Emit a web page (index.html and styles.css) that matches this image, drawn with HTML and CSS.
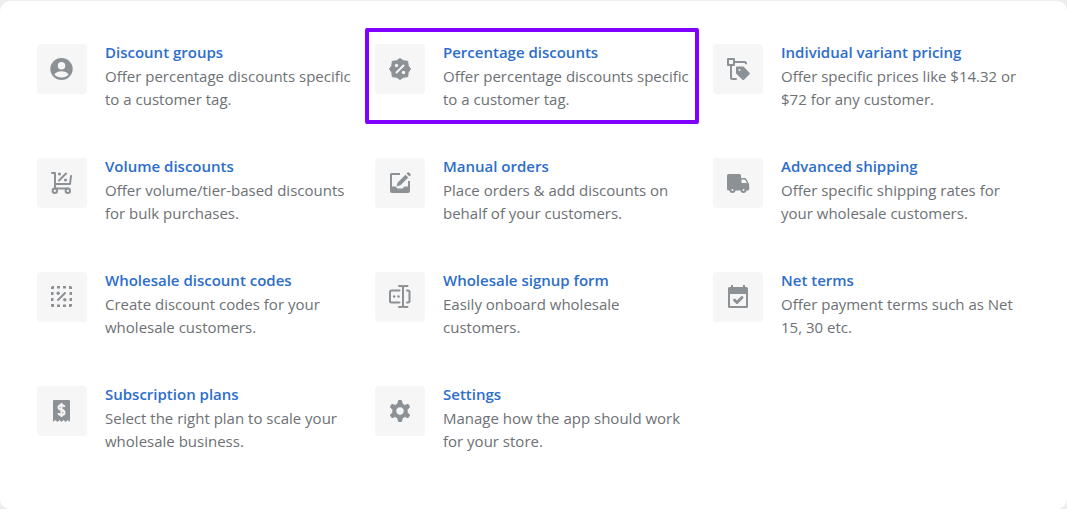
FILE: index.html
```html
<!DOCTYPE html>
<html lang="en">
<head>
<meta charset="utf-8">
<meta name="viewport" content="width=device-width, initial-scale=1">
<title>Wholesale features</title>
<link rel="stylesheet" href="styles.css">
</head>
<body>
<main class="card">
  <ul class="features">
    <li class="feature">
      <span class="tile"><svg class="icon" viewBox="0 0 24 24" aria-hidden="true"><path fill-rule="evenodd" d="M11.500 1a11.200 11 0 1 0 0 22a11.200 11 0 0 0 0-22zM11.500 5a3.700 3.700 0 1 1 0 7.500a3.700 3.700 0 0 1 0-7.500zM11.500 20.500c-3 0-5.500-1-7.200-3c1.700-2 4.200-3.200 7.200-3.200s5.500 1.200 7.200 3.200c-1.700 2-4.200 3-7.200 3z"/></svg></span>
      <div class="text"><a class="title" href="#">Discount groups</a><p class="desc">Offer percentage discounts specific to a customer tag.</p></div>
    </li>
    <li class="feature selected">
      <span class="tile"><svg class="icon" viewBox="0 0 24 24" aria-hidden="true"><path d="M12 1.500l3.500 2.300l4.200 .5l.5 4.200l2.300 3.500l-2.300 3.500l-.5 4.200l-4.200 .5l-3.500 2.300l-3.500-2.300l-4.200-.5l-.5-4.200l-2.300-3.500l2.300-3.500l.5-4.200l4.200-.5z" stroke="currentColor" stroke-linejoin="round"/><g class="cut"><path class="line" d="M8.500 15.500l7-7"/><circle cx="8.500" cy="8.500" r="1.700"/><circle cx="15.500" cy="15.500" r="1.700"/></g></svg></span>
      <div class="text"><a class="title" href="#">Percentage discounts</a><p class="desc">Offer percentage discounts specific to a customer tag.</p></div>
    </li>
    <li class="feature">
      <span class="tile"><svg class="icon" viewBox="0 0 24 24" aria-hidden="true"><path class="line" d="M2 2h6v6H2zM8 5h10.500q1.500 0 1.500 1.500M5 8v12.500q0 1.500 1.500 1.500H10"/><path fill-rule="evenodd" d="M11 9.500h6.500l6 6.200q.7.800 0 1.500l-5.500 5.500q-.8.700-1.500 0L10 16.500V10.500q0-1 1-1zM13.500 12a1 1 0 1 0 0 2a1 1 0 0 0 0-2z"/></svg></span>
      <div class="text"><a class="title" href="#">Individual variant pricing</a><p class="desc">Offer specific prices like $14.32 or $72 for any customer.</p></div>
    </li>
    <li class="feature">
      <span class="tile"><svg class="icon" viewBox="0 0 24 24" aria-hidden="true"><path class="line" d="M2 2h3v15.500h13M5 13h15L21 5"/><circle class="line" cx="4.800" cy="19.700" r="2.200"/><circle class="line" cx="17.800" cy="19.700" r="2.200"/><path class="line" d="M9 9.500l7-7"/><circle cx="9.500" cy="3" r="1.600"/><circle cx="15.500" cy="9" r="1.600"/></svg></span>
      <div class="text"><a class="title" href="#">Volume discounts</a><p class="desc">Offer volume/tier-based discounts for bulk purchases.</p></div>
    </li>
    <li class="feature">
      <span class="tile"><svg class="icon" viewBox="0 0 24 24" aria-hidden="true"><path fill-rule="evenodd" d="M3.500 2H12v2H4v11.500h3.500l2 2h5l2-2H20V10h2v10q0 2-2 2H4q-2 0-2-2V3.500Q2 2 3.500 2z"/><path d="M8.500 15.500l1.200-4l7.800-7.800l2.800 2.800l-7.800 7.800zM18.500 2.600l1-1q.7-.7 1.500 0l1.500 1.500q.7.700 0 1.500l-1 1z"/></svg></span>
      <div class="text"><a class="title" href="#">Manual orders</a><p class="desc">Place orders &amp; add discounts on behalf of your customers.</p></div>
    </li>
    <li class="feature">
      <span class="tile"><svg class="icon" viewBox="0 0 24 24" aria-hidden="true"><path fill-rule="evenodd" d="M2.500 3h11q1.500 0 1.500 1.500V7h3.500q1.300 0 2 1.200l2.200 4.300q.5.800.5 2V18q0 1.500-1.500 1.500H2.500Q1 19.500 1 18V4.500Q1 3 2.500 3zM15.500 8.500V12H21l-1.600-2.700q-.5-.8-1.400-.8z"/><g class="wheel"><circle cx="6.500" cy="19" r="2"/><circle cx="17.500" cy="19" r="2"/></g></svg></span>
      <div class="text"><a class="title" href="#">Advanced shipping</a><p class="desc">Offer specific shipping rates for your wholesale customers.</p></div>
    </li>
    <li class="feature">
      <span class="tile"><svg class="icon" viewBox="0 0 24 24" aria-hidden="true"><path d="M1 4V2.500Q1 1 2.500 1H4v3zM7 1h3v2.500H7zM13 1h3v2.500h-3zM19 1h1.500q1.500 0 1.500 1.500V4h-3zM1 7h2.500v3H1zM1 13h2.500v3H1zM19.500 7H22v3h-2.500zM19.500 13H22v3h-2.500zM1 19h3v3H2.500Q1 22 1 20.500zM7 19.500h3V22H7zM13 19.500h3V22h-3zM19 19h3v1.500q0 1.500-1.500 1.500H19z"/><path class="line" d="M8 15l7-7"/><circle cx="8.200" cy="8.200" r="1.700"/><circle cx="14.800" cy="14.800" r="1.700"/></svg></span>
      <div class="text"><a class="title" href="#">Wholesale discount codes</a><p class="desc">Create discount codes for your wholesale customers.</p></div>
    </li>
    <li class="feature">
      <span class="tile"><svg class="icon" viewBox="0 0 24 24" aria-hidden="true"><path class="line" d="M11.500 5.500H3.500Q2 5.500 2 7v9q0 1.500 1.500 1.500h8M19 5.500h1q1.500 0 1.500 1.500v9q0 1.500-1.500 1.500h-1M11 1h2.500q1.500 0 1.500 1.500v18q0 1.500-1.500 1.500H11M19.500 1h-3Q15 1 15 2.500v18q0 1.500 1.500 1.500h3"/><circle cx="6.200" cy="11.500" r="1.300"/><circle cx="10.500" cy="11.500" r="1.300"/></svg></span>
      <div class="text"><a class="title" href="#">Wholesale signup form</a><p class="desc">Easily onboard wholesale customers.</p></div>
    </li>
    <li class="feature">
      <span class="tile"><svg class="icon" viewBox="0 0 24 24" aria-hidden="true"><path fill-rule="evenodd" d="M5 0h2v2h10V0h2v2h1.500Q22 2 22 3.500v18q0 1.500-1.500 1.500h-17Q2 23 2 21.500v-18Q2 2 3.500 2H5zM4 9v12h16V9z"/><path class="line thick" d="M8.500 15l2.500 2.500l5-5"/></svg></span>
      <div class="text"><a class="title" href="#">Net terms</a><p class="desc">Offer payment terms such as Net 15, 30 etc.</p></div>
    </li>
    <li class="feature">
      <span class="tile"><svg class="icon" viewBox="0 0 24 24" aria-hidden="true"><path d="M4 1h15q1 0 1 1v21l-2.300-2l-2.200 2l-2-2l-2 2l-2-2l-2 2l-2.200-2L3 23V2q0-1 1-1z"/><path class="dollar" d="M11.500 4v14M14.500 8q-.5-2-3-2t-3 2.300q0 1.800 3 2.500t3 2.700q0 2.500-3 2.500t-3-2"/></svg></span>
      <div class="text"><a class="title" href="#">Subscription plans</a><p class="desc">Select the right plan to scale your wholesale business.</p></div>
    </li>
    <li class="feature">
      <span class="tile"><svg class="icon" viewBox="0 0 24 24" aria-hidden="true"><path stroke="currentColor" stroke-linejoin="round" fill-rule="evenodd" d="M10.500 1.500h3l.8 3.500l2.500 1.400l3.300-1.100l1.600 2.700l-2.600 2.500v3l2.600 2.500l-1.600 2.700l-3.300-1.100l-2.500 1.400l-.8 3.500h-3l-.8-3.500l-2.500-1.400l-3.300 1.100L2.300 16l2.600-2.500v-3L2.300 8l1.600-2.700l3.300 1.100L9.700 5zM12 7.800a4.200 4.200 0 1 0 0 8.400a4.200 4.200 0 0 0 0-8.400z"/></svg></span>
      <div class="text"><a class="title" href="#">Settings</a><p class="desc">Manage how the app should work for your store.</p></div>
    </li>
  </ul>
</main>
</body>
</html>
```
FILE: styles.css
```css
* {
  box-sizing: border-box;
}

body {
  margin: 0;
  padding-top: 1px;
  background: #ededed;
  color: #6d7175;
  font-family: "Open Sans", "Noto Sans", sans-serif;
  font-size: 15px;
  line-height: 23px;
}

.card {
  min-height: calc(100vh - 1px);
  padding: 27px 30px 42px 27px;
  border-radius: 10px;
  background: #fff;
}

.features {
  display: grid;
  grid-template-columns: repeat(3, 1fr);
  gap: 18px 4px;
  margin: 0;
  padding: 0;
  list-style: none;
}

.feature {
  display: flex;
  gap: 18px;
  padding: 9px 0 9px 6px;
  border: 4px solid transparent;
}

.selected {
  border-color: #7f00ff;
  border-radius: 2px;
}

.tile {
  display: grid;
  place-items: center;
  flex: none;
  width: 50px;
  height: 50px;
  margin-top: 3px;
  border-radius: 4px;
  background: #f6f6f7;
}

.icon {
  width: 24px;
  height: 24px;
  fill: #8c9196;
  color: #8c9196;
}

.line {
  fill: none;
  stroke: #8c9196;
  stroke-width: 2;
  stroke-linecap: round;
  stroke-linejoin: round;
}

.thick {
  stroke-width: 3;
}

.cut {
  fill: #f6f6f7;
}

.cut .line {
  stroke: #f6f6f7;
}

.wheel {
  fill: #f6f6f7;
  stroke: #8c9196;
  stroke-width: 2;
}

.dollar {
  fill: none;
  stroke: #f6f6f7;
  stroke-width: 2;
}

.text {
  flex: 1;
  min-width: 0;
}

.title {
  display: block;
  margin-bottom: 1px;
  color: #2c6ecb;
  font-weight: 600;
  text-decoration: none;
}

.desc {
  margin: 0;
}
```
